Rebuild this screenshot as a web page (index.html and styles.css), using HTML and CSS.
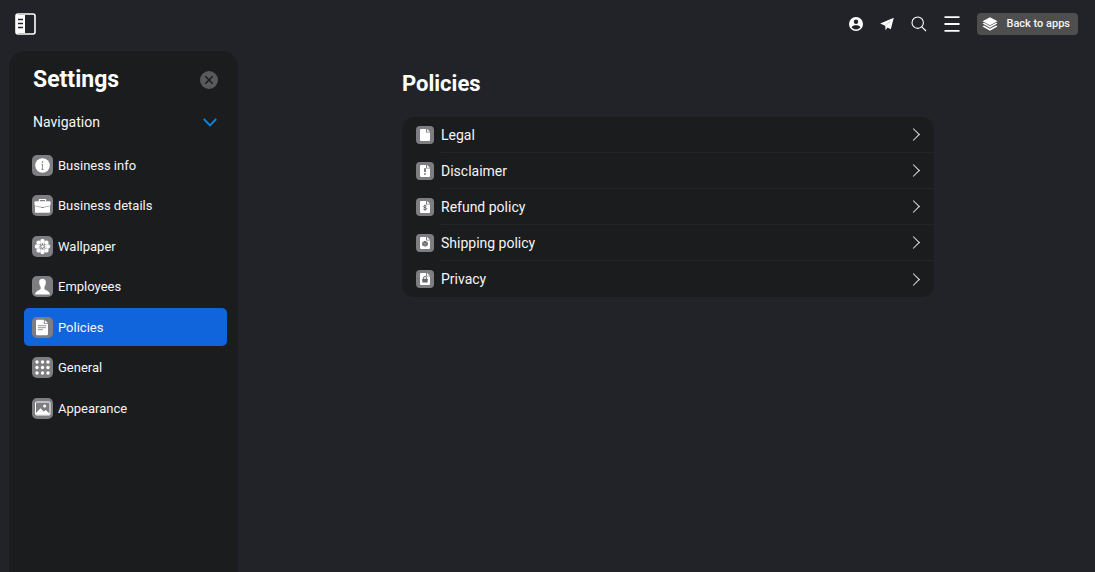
FILE: index.html
```html
<!DOCTYPE html>
<html lang="en">
<head>
    <meta charset="UTF-8">
    <meta name="viewport" content="width=device-width, initial-scale=1.0">
    <title>Policies</title>

    <link rel="stylesheet" href="styles.css">
</head>
<body>

    <header class="topbar">
        <button class="icon-btn" type="button" aria-label="Toggle sidebar">
            <svg width="21" height="22" viewBox="0 0 21 22">
                <rect x="1" y="1" width="19" height="20" rx="2" fill="none" stroke="#fff" stroke-width="1.6"/>
                <path d="M1 2h9v18H1z" fill="#fff"/>
                <path d="M3 6.5h5M3 10.5h5M3 14.5h5" stroke="#222328" stroke-width="1.4"/>
            </svg>
        </button>

        <div class="topbar-actions">
            <button class="icon-btn" type="button" aria-label="Account">
                <svg width="14" height="14" viewBox="0 0 14 14">
                    <circle cx="7" cy="7" r="7" fill="#fff"/>
                    <circle cx="7" cy="4.7" r="2.2" fill="#222328"/>
                    <path d="M2.6 10.2C3.4 8.7 5 8.2 7 8.2s3.6.5 4.4 2C10.4 11.6 8.9 12.4 7 12.4s-3.4-.8-4.4-2.2z" fill="#222328"/>
                </svg>
            </button>
            <button class="icon-btn" type="button" aria-label="Send">
                <svg width="14" height="14" viewBox="0 0 14 14">
                    <path d="M13.8.8L.2 6.6l4.4 2L11 3.6 5.4 9.2v4l2.200-2.600 3.200 1.600z" fill="#fff"/>
                    <path d="M4.600 8.600L11.400 3 5.600 9.600z" fill="#fff"/>
                </svg>
            </button>
            <button class="icon-btn" type="button" aria-label="Search">
                <svg width="16" height="16" viewBox="0 0 16 16" fill="none" stroke="#fff" stroke-width="1.1">
                    <circle cx="6.7" cy="6.7" r="5.7"/>
                    <path d="M10.8 10.8L15 15"/>
                </svg>
            </button>
            <button class="icon-btn" type="button" aria-label="Menu">
                <svg width="16" height="16" viewBox="0 0 16 16" stroke="#fff" stroke-width="1.8">
                    <path d="M.5 1.2h15M.5 8h15M.5 14.8h15"/>
                </svg>
            </button>
            <a class="back-btn" href="#">
                <svg width="16" height="14" viewBox="0 0 16 14" fill="#fff">
                    <path d="M8 .3l7.500 3.900L8 8.200.5 4.200z"/>
                    <path d="M.5 6.600l1.500-.8L8 9l6-3.200 1.500.8L8 10.700z"/>
                    <path d="M.5 9.400l1.500-.8 6 3.100 6-3.100 1.500.8L8 13.700z"/>
                </svg>
                Back to apps
            </a>
        </div>
    </header>

    <div class="layout">
        <aside class="sidebar">
            <div class="sidebar-head">
                <h1>Settings</h1>
                <button class="icon-btn" type="button" aria-label="Close">
                    <svg width="18" height="18" viewBox="0 0 18 18">
                        <circle cx="9" cy="9" r="9" fill="#5a5a5c"/>
                        <path d="M5.3 5.3l7.4 7.4M12.7 5.3l-7.4 7.4" stroke="#1b1c1e" stroke-width="1.5"/>
                    </svg>
                </button>
            </div>

            <button class="nav-toggle" type="button" aria-expanded="true">
                Navigation
                <svg width="14" height="9" viewBox="0 0 14 9">
                    <path d="M.8 1L7 7.4 13.2 1" fill="none" stroke="#0f86dc" stroke-width="1.8"/>
                </svg>
            </button>

            <nav>
                <ul class="nav-list">
                    <li>
                        <a class="nav-item" href="#">
                            <svg class="tile" viewBox="0 0 21 21">
                                <circle cx="10.5" cy="10.5" r="7.3" fill="#fff"/>
                                <circle cx="10.5" cy="7" r=".8" fill="#66676b"/>
                                <path d="M10.5 9v5.5M9.3 9.2h1M9.3 14.4h2.4" fill="none" stroke="#77787c" stroke-width=".8"/>
                            </svg>
                            Business info
                        </a>
                    </li>
                    <li>
                        <a class="nav-item" href="#">
                            <svg class="tile" viewBox="0 0 21 21">
                                <path d="M7.5 6.5v-2h6v2" fill="none" stroke="#fff" stroke-width="1.2"/>
                                <path d="M3.5 6.3h14a1 1 0 0 1 1 1v2.900c-2.500 1-5 1.700-8 1.700s-5.500-.7-8-1.700V7.300a1 1 0 0 1 1-1z" fill="#fff"/>
                                <path d="M3 11c2 .8 4 1.300 6.300 1.400.1.900 2.300.9 2.400 0 2.300-.1 4.300-.6 6.300-1.400v6a.8.8 0 0 1-.8.800H3.800a.8.8 0 0 1-.8-.8z" fill="#fff"/>
                            </svg>
                            Business details
                        </a>
                    </li>
                    <li>
                        <a class="nav-item" href="#">
                            <svg class="tile" viewBox="0 0 21 21">
                                <g fill="#fff">
                                    <circle cx="10.5" cy="5" r="2.2"/>
                                    <circle cx="14.4" cy="6.6" r="2.2"/>
                                    <circle cx="16" cy="10.5" r="2.2"/>
                                    <circle cx="14.4" cy="14.4" r="2.2"/>
                                    <circle cx="10.5" cy="16" r="2.2"/>
                                    <circle cx="6.6" cy="14.4" r="2.2"/>
                                    <circle cx="5" cy="10.5" r="2.2"/>
                                    <circle cx="6.6" cy="6.6" r="2.2"/>
                                    <circle cx="10.5" cy="10.5" r="1.3"/>
                                </g>
                                <circle cx="10.5" cy="10.5" r="2.9" fill="none" stroke="#fff" stroke-width="1.4" stroke-dasharray="1.3 .98"/>
                            </svg>
                            Wallpaper
                        </a>
                    </li>
                    <li>
                        <a class="nav-item" href="#">
                            <svg class="tile" viewBox="0 0 21 21">
                                <path d="M10.5 2.8c2.300 0 3.400 1.400 3.300 3.500-.1 2.300-.6 3.600-1.400 4.500v2.300c.5 1.300 5.300 1.700 5.600 5.500H3c.3-3.800 5.100-4.200 5.600-5.500v-2.300C7.800 9.900 7.300 8.600 7.200 6.300 7.100 4.200 8.200 2.800 10.500 2.800z" fill="#fff"/>
                            </svg>
                            Employees
                        </a>
                    </li>
                    <li>
                        <a class="nav-item active" href="#" aria-current="page">
                            <svg class="tile" viewBox="0 0 21 21">
                                <path d="M5 2.800h6.800v4h4.200v10.200a1.200 1.200 0 0 1-1.200 1.200H5.200A1.200 1.200 0 0 1 4 17V4a1.200 1.200 0 0 1 1-1.200zM12.700 3l3.200 3h-3.200z" fill="#fff"/>
                                <path d="M6 8.700h8M6 10.700h8M6 12.700h5" stroke="#8a8a8e" stroke-width=".9"/>
                            </svg>
                            Policies
                        </a>
                    </li>
                    <li>
                        <a class="nav-item" href="#">
                            <svg class="tile" viewBox="0 0 21 21" fill="#fff">
                                <circle cx="5" cy="5" r="1.7"/>
                                <circle cx="10.5" cy="5" r="1.7"/>
                                <circle cx="16" cy="5" r="1.7"/>
                                <circle cx="5" cy="10.5" r="1.7"/>
                                <circle cx="10.5" cy="10.5" r="1.7"/>
                                <circle cx="16" cy="10.5" r="1.7"/>
                                <circle cx="5" cy="16" r="1.7"/>
                                <circle cx="10.5" cy="16" r="1.7"/>
                                <circle cx="16" cy="16" r="1.7"/>
                            </svg>
                            General
                        </a>
                    </li>
                    <li>
                        <a class="nav-item" href="#">
                            <svg class="tile" viewBox="0 0 21 21">
                                <rect x="3.5" y="4" width="14.5" height="13" rx="1" fill="none" stroke="#fff"/>
                                <path d="M4 15l4.500-4.800 3.200 3.400 2-1.600 3.800 3.500v1.300H4z" fill="#fff"/>
                                <circle cx="12.6" cy="8" r="1.5" fill="#fff"/>
                            </svg>
                            Appearance
                        </a>
                    </li>
                </ul>
            </nav>
        </aside>

        <main class="content">
            <section class="panel">
                <h2>Policies</h2>

                <ul class="policy-list">
                    <li>
                        <a class="policy" href="#">
                            <svg class="tile small" viewBox="0 0 18 18">
                                <path class="page" d="M5 3h5v3.500h4V14a1 1 0 0 1-1 1H5a1 1 0 0 1-1-1V4a1 1 0 0 1 1-1zM11 3l3 2.700h-3z"/>
                            </svg>
                            <span class="policy-name">Legal</span>
                        </a>
                    </li>
                    <li>
                        <a class="policy" href="#">
                            <svg class="tile small" viewBox="0 0 18 18">
                                <path class="page" d="M5 3h5v3.500h4V14a1 1 0 0 1-1 1H5a1 1 0 0 1-1-1V4a1 1 0 0 1 1-1zM11 3l3 2.700h-3z"/>
                                <path d="M9 6.200v3.800M9 11.200v1.500" stroke="#66676b" stroke-width="1.700"/>
                            </svg>
                            <span class="policy-name">Disclaimer</span>
                        </a>
                    </li>
                    <li>
                        <a class="policy" href="#">
                            <svg class="tile small" viewBox="0 0 18 18">
                                <path class="page" d="M5 3h5v3.500h4V14a1 1 0 0 1-1 1H5a1 1 0 0 1-1-1V4a1 1 0 0 1 1-1zM11 3l3 2.700h-3z"/>
                                <path d="M10.600 8.200c-.5-.7-3.100-.9-3.100.4 0 1.400 3.200.7 3.200 2.100 0 1.300-2.700 1.200-3.300.3M9 6.600v6" fill="none" stroke="#66676b" stroke-width="1"/>
                            </svg>
                            <span class="policy-name">Refund policy</span>
                        </a>
                    </li>
                    <li>
                        <a class="policy" href="#">
                            <svg class="tile small" viewBox="0 0 18 18">
                                <path class="page" d="M5 3h5v3.500h4V14a1 1 0 0 1-1 1H5a1 1 0 0 1-1-1V4a1 1 0 0 1 1-1zM11 3l3 2.700h-3z"/>
                                <path d="M9 6.700l2.800 1.600v3L9 12.800l-2.800-1.500v-3z" fill="#66676b"/>
                                <path d="M6.600 8.500L9 9.800l2.400-1.300M9 9.800v2.700" fill="none" stroke="#c9c9cc" stroke-width=".5"/>
                            </svg>
                            <span class="policy-name">Shipping policy</span>
                        </a>
                    </li>
                    <li>
                        <a class="policy" href="#">
                            <svg class="tile small" viewBox="0 0 18 18">
                                <path class="page" d="M5 3h5v3.500h4V14a1 1 0 0 1-1 1H5a1 1 0 0 1-1-1V4a1 1 0 0 1 1-1zM11 3l3 2.700h-3z"/>
                                <rect x="6.300" y="8.800" width="5.400" height="3.800" rx=".5" fill="#66676b"/>
                                <path d="M7.500 9.200V8a1.500 1.500 0 0 1 3 0v1.200" fill="none" stroke="#66676b" stroke-width=".9"/>
                            </svg>
                            <span class="policy-name">Privacy</span>
                        </a>
                    </li>
                </ul>
            </section>
        </main>
    </div>

</body>
</html>
```
FILE: styles.css
```css
* {
    box-sizing: border-box;
}

body {
    font-family: Roboto, Arial, sans-serif;
    background-color: #222328;
    color: #f5f5f5;
    margin: 0;
    min-height: 100vh;
    display: flex;
    flex-direction: column;
}

h1, h2 {
    margin: 0;
    color: #fff;
    font-weight: bold;
}

ul {
    list-style: none;
    margin: 0;
    padding: 0;
}

a {
    color: inherit;
    text-decoration: none;
}

svg {
    display: block;
    flex-shrink: 0;
}

button {
    background: none;
    border: none;
    padding: 0;
    color: inherit;
    font-family: inherit;
    cursor: pointer;
}

/* Top bar */
.topbar {
    display: flex;
    justify-content: space-between;
    align-items: center;
    padding: 13px 17px 16px 15px;
}

.topbar-actions {
    display: flex;
    align-items: center;
    gap: 17px;
}

.back-btn {
    display: flex;
    align-items: center;
    gap: 8px;
    padding: 4px 8px 4px 5px;
    border-radius: 4px;
    background-color: #4e4e4e;
    font-size: 11px;
    font-weight: 500;
    line-height: 14px;
}

/* Sidebar */
.layout {
    display: flex;
    flex: 1;
    gap: 3px;
}

.sidebar {
    width: 229px;
    margin-left: 9px;
    padding: 14px 11px 0 15px;
    border-radius: 16px 16px 0 0;
    background-color: #1b1c1e;
}

.sidebar-head {
    display: flex;
    justify-content: space-between;
    align-items: center;
    padding: 0 9px;
}

.sidebar-head h1 {
    font-size: 23px;
    line-height: 29px;
}

.nav-toggle {
    display: flex;
    justify-content: space-between;
    align-items: center;
    width: 100%;
    margin: 17px 0 13px;
    padding: 0 10px 0 9px;
    font-size: 14px;
    line-height: 22px;
}

.nav-item {
    display: flex;
    align-items: center;
    gap: 5px;
    height: 38px;
    padding: 0 8px;
    border-radius: 5px;
    font-size: 13px;
}

.nav-list li {
    margin-bottom: 2px;
}

.nav-list li:nth-child(even) {
    margin-bottom: 3px;
}

.nav-item.active {
    background-color: #1065dc;
}

.tile {
    width: 21px;
    height: 21px;
    border-radius: 5px;
    background-color: #7e7e82;
}

.tile.small {
    width: 18px;
    height: 18px;
    border-radius: 4px;
}

.page {
    fill: #fff;
}

/* Content */
.content {
    flex: 1;
    padding-top: 20px;
}

.panel {
    max-width: 532px;
    margin: 0 auto;
}

.panel h2 {
    font-size: 22px;
    line-height: 26px;
}

.policy-list {
    margin-top: 20px;
    border-radius: 12px;
    background-color: #1b1c1e;
    overflow: hidden;
}

.policy {
    display: flex;
    align-items: center;
    gap: 7px;
    padding-left: 14px;
    font-size: 14px;
}

.policy-name {
    flex: 1;
    display: flex;
    justify-content: space-between;
    align-items: center;
    height: 36px;
    padding-right: 16px;
    border-bottom: 1px solid #232427;
}

/* Chevron at the end of the row */
.policy-name::after {
    content: "";
    width: 8px;
    height: 8px;
    border-top: 1px solid #e6e6e6;
    border-right: 1px solid #e6e6e6;
    transform: rotate(45deg);
}

.policy-list li:last-child .policy-name {
    border-bottom: none;
}
```
